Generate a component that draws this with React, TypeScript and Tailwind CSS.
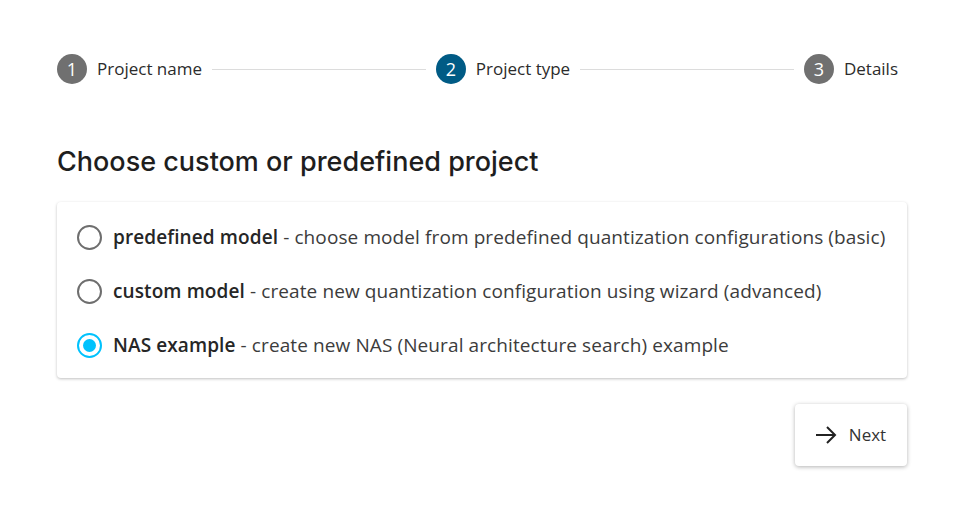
import { Fragment } from "react";

const steps = [
  { n: 1, label: "Project name", active: false },
  { n: 2, label: "Project type", active: true },
  { n: 3, label: "Details", active: false },
];

const options = [
  {
    id: "predefined",
    title: "predefined model",
    desc: "choose model from predefined quantization configurations (basic)",
  },
  {
    id: "custom",
    title: "custom model",
    desc: "create new quantization configuration using wizard (advanced)",
  },
  {
    id: "nas",
    title: "NAS example",
    desc: "create new NAS (Neural architecture search) example",
  },
];

function Radio({ checked }: { checked: boolean }) {
  return checked ? (
    <span className="flex h-[25px] w-[25px] shrink-0 items-center justify-center rounded-full border-2 border-[#00c2fd]">
      <span className="h-[13px] w-[13px] rounded-full bg-[#00c2fd]" />
    </span>
  ) : (
    <span className="h-[25px] w-[25px] shrink-0 rounded-full border-2 border-[#6e6e6e]" />
  );
}

export default function App() {
  const selected = "nas";

  return (
    <div className="min-h-[519px] bg-white pl-[57px] pr-[55px] pt-[54px] text-[#262626] font-['Open_Sans','Noto_Sans',sans-serif]">
      {/* Stepper */}
      <div className="flex items-center pr-[9px]">
        {steps.map((s, i) => (
          <Fragment key={s.n}>
            <div className="flex items-center">
              <span
                className={`flex h-[30px] w-[30px] items-center justify-center rounded-full text-[18px] text-white ${
                  s.active ? "bg-[#005b85]" : "bg-[#707070]"
                }`}
              >
                {s.n}
              </span>
              <span className="ml-[10px] text-[17px] text-[#2b2b2b]">{s.label}</span>
            </div>
            {i < steps.length - 1 && <span className="mx-[10px] h-px flex-1 bg-[#dcdcdc]" />}
          </Fragment>
        ))}
      </div>

      <h1 className="mt-[58px] text-[27px] font-medium text-[#1e1e1e] font-['Inter','Noto_Sans',sans-serif]">
        Choose custom or predefined project
      </h1>

      {/* Options card */}
      <div className="mt-[19px] flex flex-col gap-[29px] rounded-[4px] bg-white px-[20px] pb-[20px] pt-[23px] shadow-[0_1px_3px_rgba(0,0,0,0.25)]">
        {options.map((o) => (
          <label key={o.id} className="flex items-center gap-[11px] text-[19px] leading-[24px] tracking-[0.1px]">
            <Radio checked={o.id === selected} />
            <span>
              <span className="font-semibold text-[#262626]">{o.title}</span>
              <span className="text-[#3c3c3c]"> - {o.desc}</span>
            </span>
          </label>
        ))}
      </div>

      <div className="mt-[26px] flex justify-end">
        <button className="flex h-[62px] w-[112px] items-center justify-center gap-[12px] rounded-[4px] bg-white text-[17px] text-[#333] shadow-[0_1px_4px_rgba(0,0,0,0.3)]">
          <svg width="21" height="20" viewBox="0 0 21 20" fill="none" stroke="#222" strokeWidth="2">
            <path d="M0 10H19" />
            <path d="M11 2L19 10L11 18" />
          </svg>
          Next
        </button>
      </div>
    </div>
  );
}
